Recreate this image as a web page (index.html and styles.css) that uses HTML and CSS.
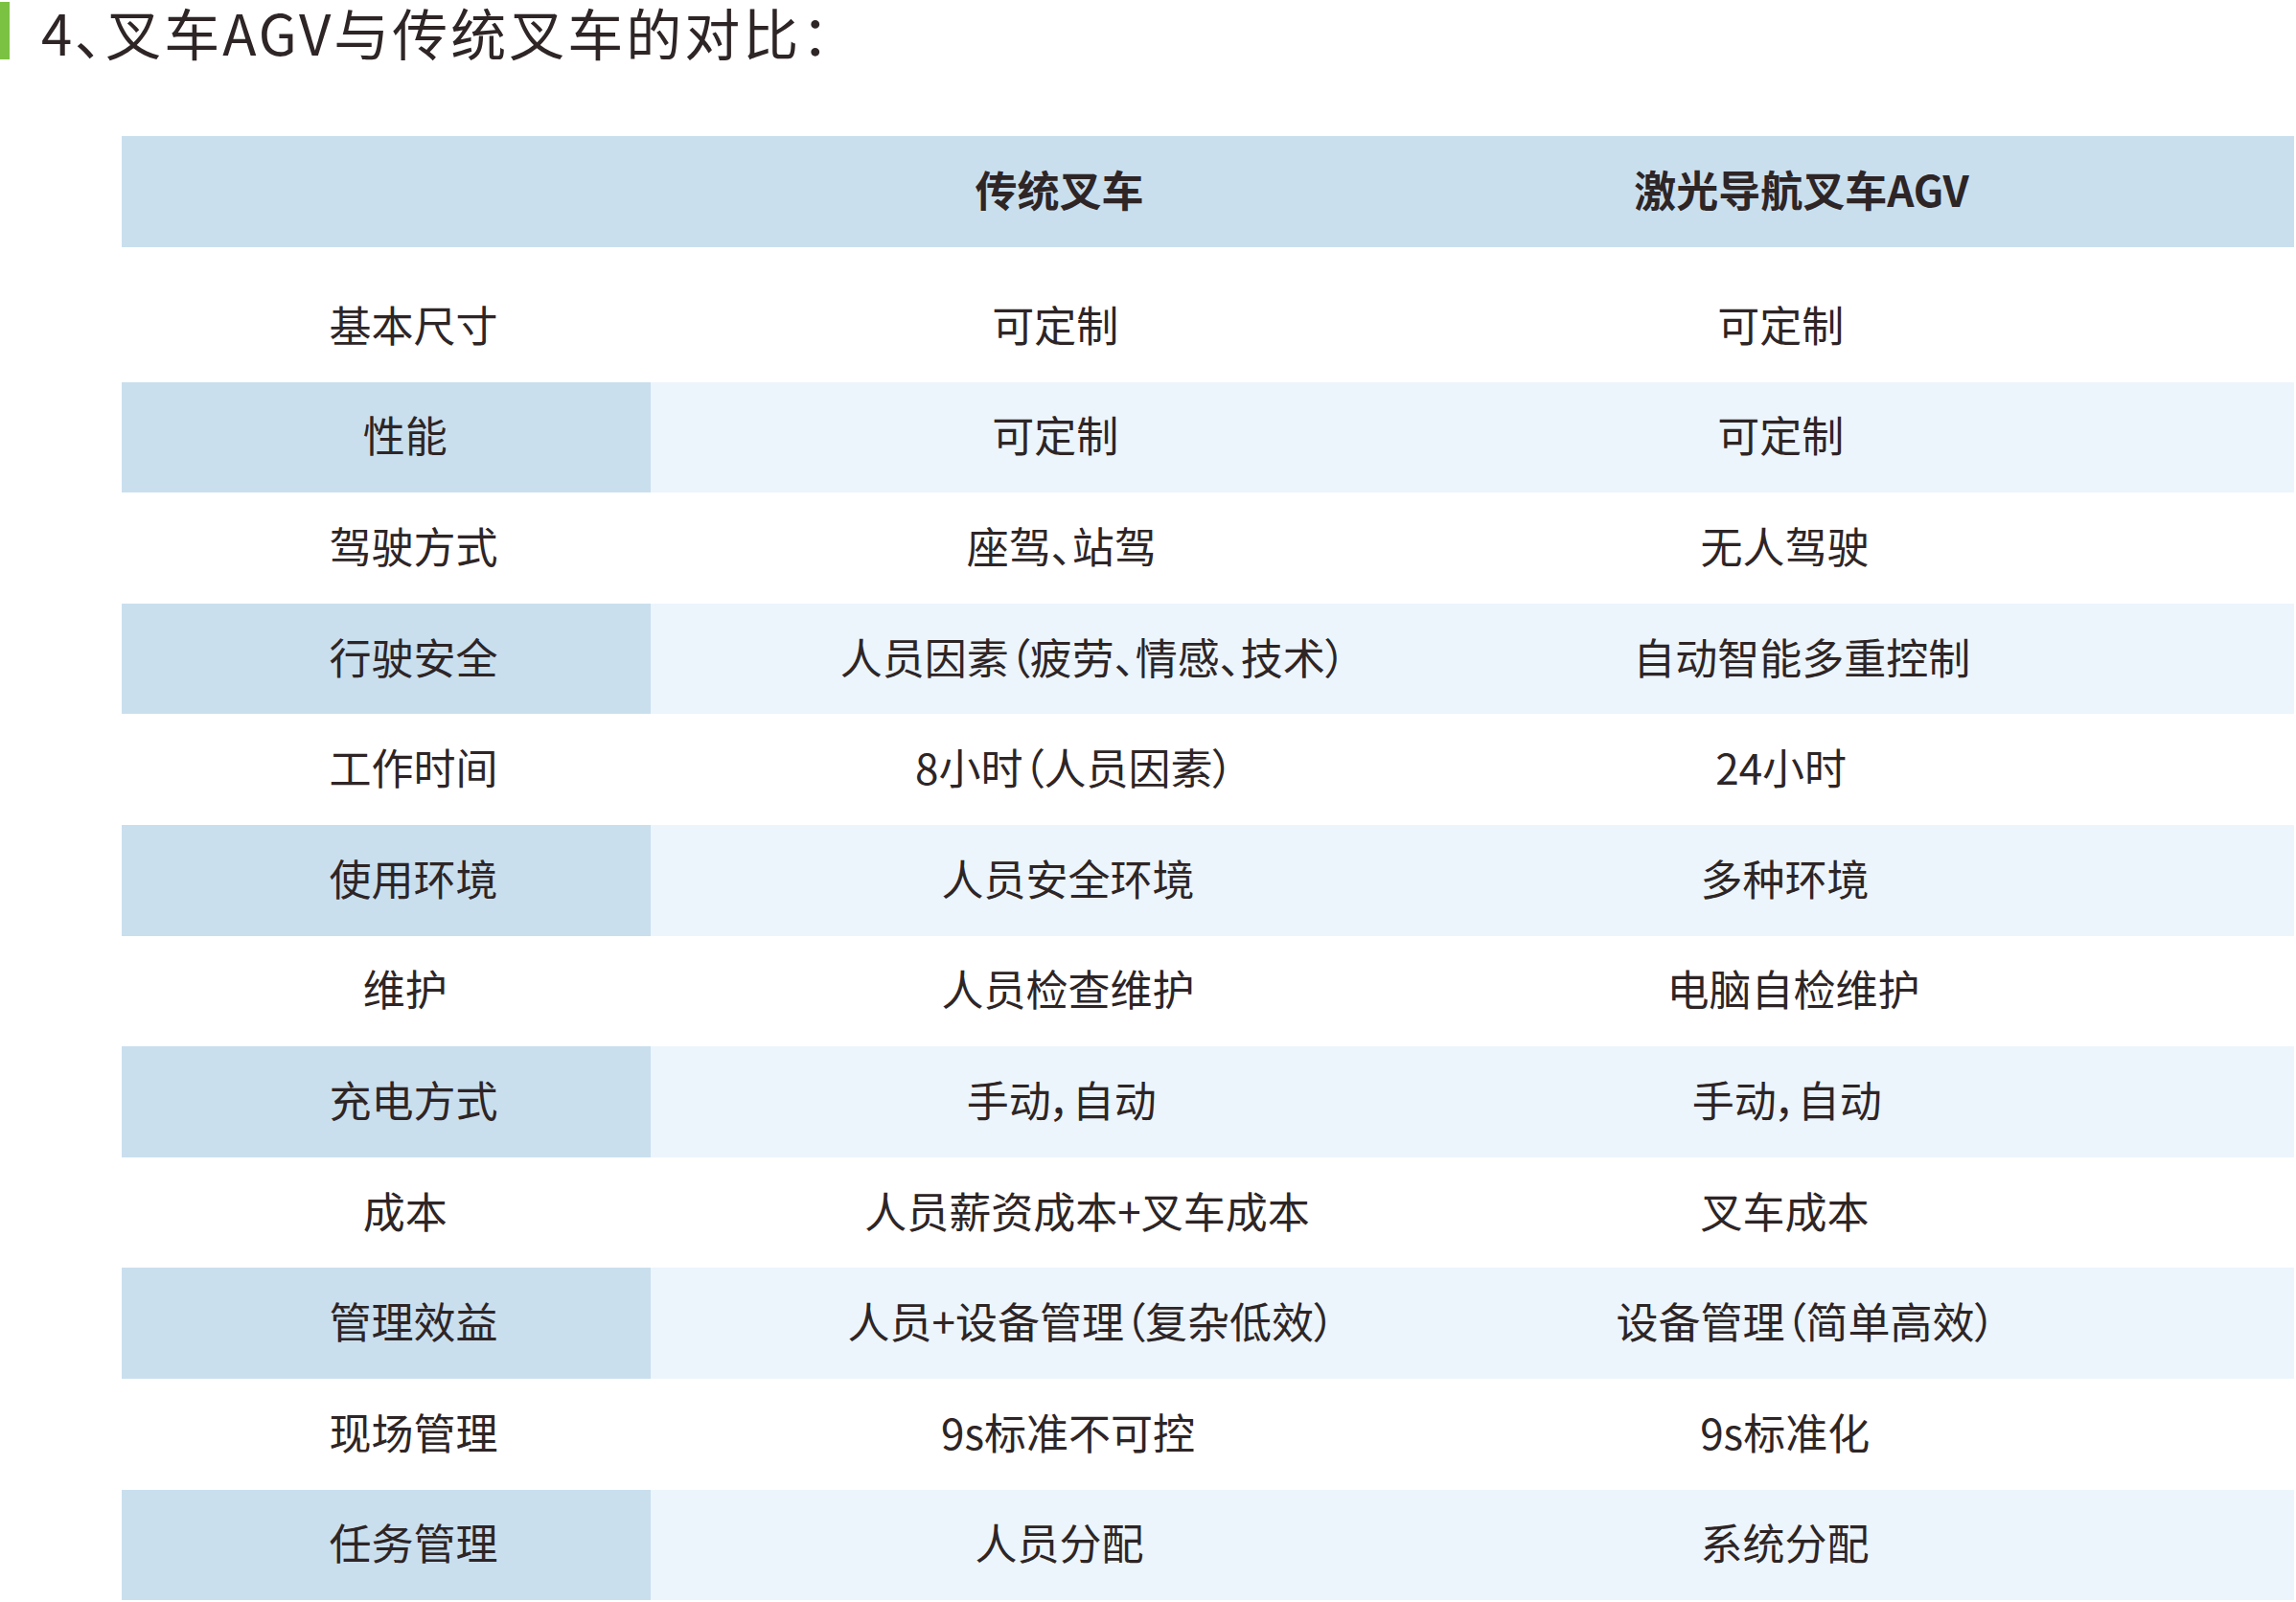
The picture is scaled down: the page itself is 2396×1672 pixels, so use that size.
FILE: index.html
```html
<!DOCTYPE html>
<html lang="zh-CN">
<head>
<meta charset="utf-8">
<title>叉车AGV与传统叉车的对比</title>
<link rel="stylesheet" href="styles.css">
</head>
<body>
<div class="page">
  <div class="title">
    <span class="bar"></span>
    <h1 class="title-text">4、叉车AGV与传统叉车的对比：</h1>
  </div>
  <div class="table">
    <div class="head">
      <div class="c1"></div>
      <div class="c2"><span class="t">传统叉车</span></div>
      <div class="c3"><span class="t">激光导航叉车AGV</span></div>
    </div>
    <div class="body">
      <div class="row"><div class="c1"><span class="t">基本尺寸</span></div><div class="c2"><span class="t">可定制</span></div><div class="c3"><span class="t">可定制</span></div></div>
      <div class="row alt"><div class="c1"><span class="t">性能</span></div><div class="c2"><span class="t">可定制</span></div><div class="c3"><span class="t">可定制</span></div></div>
      <div class="row"><div class="c1"><span class="t">驾驶方式</span></div><div class="c2"><span class="t">座驾、站驾</span></div><div class="c3"><span class="t">无人驾驶</span></div></div>
      <div class="row alt"><div class="c1"><span class="t">行驶安全</span></div><div class="c2"><span class="t">人员因素（疲劳、情感、技术）</span></div><div class="c3"><span class="t">自动智能多重控制</span></div></div>
      <div class="row"><div class="c1"><span class="t">工作时间</span></div><div class="c2"><span class="t">8小时（人员因素）</span></div><div class="c3"><span class="t">24小时</span></div></div>
      <div class="row alt"><div class="c1"><span class="t">使用环境</span></div><div class="c2"><span class="t">人员安全环境</span></div><div class="c3"><span class="t">多种环境</span></div></div>
      <div class="row"><div class="c1"><span class="t">维护</span></div><div class="c2"><span class="t">人员检查维护</span></div><div class="c3"><span class="t">电脑自检维护</span></div></div>
      <div class="row alt"><div class="c1"><span class="t">充电方式</span></div><div class="c2"><span class="t">手动，自动</span></div><div class="c3"><span class="t">手动，自动</span></div></div>
      <div class="row"><div class="c1"><span class="t">成本</span></div><div class="c2"><span class="t">人员薪资成本+叉车成本</span></div><div class="c3"><span class="t">叉车成本</span></div></div>
      <div class="row alt"><div class="c1"><span class="t">管理效益</span></div><div class="c2"><span class="t">人员+设备管理（复杂低效）</span></div><div class="c3"><span class="t">设备管理（简单高效）</span></div></div>
      <div class="row"><div class="c1"><span class="t">现场管理</span></div><div class="c2"><span class="t">9s标准不可控</span></div><div class="c3"><span class="t">9s标准化</span></div></div>
      <div class="row alt"><div class="c1"><span class="t">任务管理</span></div><div class="c2"><span class="t">人员分配</span></div><div class="c3"><span class="t">系统分配</span></div></div>
    </div>
  </div>
</div>
</body>
</html>
```

FILE: styles.css
```css
html, body {
  margin: 0;
  padding: 0;
  background: #ffffff;
}

body {
  font-family: "Noto Sans CJK SC", "Noto Sans", sans-serif;
  color: #2e2526;
  font-feature-settings: "palt" 1;
}

.page {
  width: 2396px;
  height: 1672px;
  overflow: hidden;
}

.title {
  display: flex;
  align-items: flex-start;
  height: 142px;
}

.bar {
  display: block;
  width: 10px;
  height: 60px;
  margin-top: 2px;
  background: #7cc242;
  flex: none;
}

.title-text {
  margin: 0 0 0 33px;
  font-size: 58px;
  font-weight: 400;
  line-height: 66px;
  letter-spacing: 3px;
}

.table {
  margin-left: 127px;
  width: 2267px;
}

.head,
.row {
  display: grid;
  grid-template-columns: 552px 858px 656px 201px;
  font-size: 44px;
}

.head {
  height: 116px;
  background: #c9dfee;
  font-weight: 700;
}

.body {
  margin-top: 25px;
}

.row {
  height: 115.6px;
  font-weight: 400;
}

.row.alt {
  background: #ecf5fc;
}

.row.alt .c1 {
  background: #c9dfee;
}

.c1,
.c2,
.c3 {
  display: flex;
  align-items: center;
  justify-content: center;
  box-sizing: border-box;
  padding-bottom: 6px;
}

.c1 {
  padding-left: 22px;
}

.c2 {
  padding-right: 40px;
}

.c3 {
  padding-right: 40px;
}

.t {
  display: inline-block;
  white-space: nowrap;
  transform: translateX(10%);
}
```
